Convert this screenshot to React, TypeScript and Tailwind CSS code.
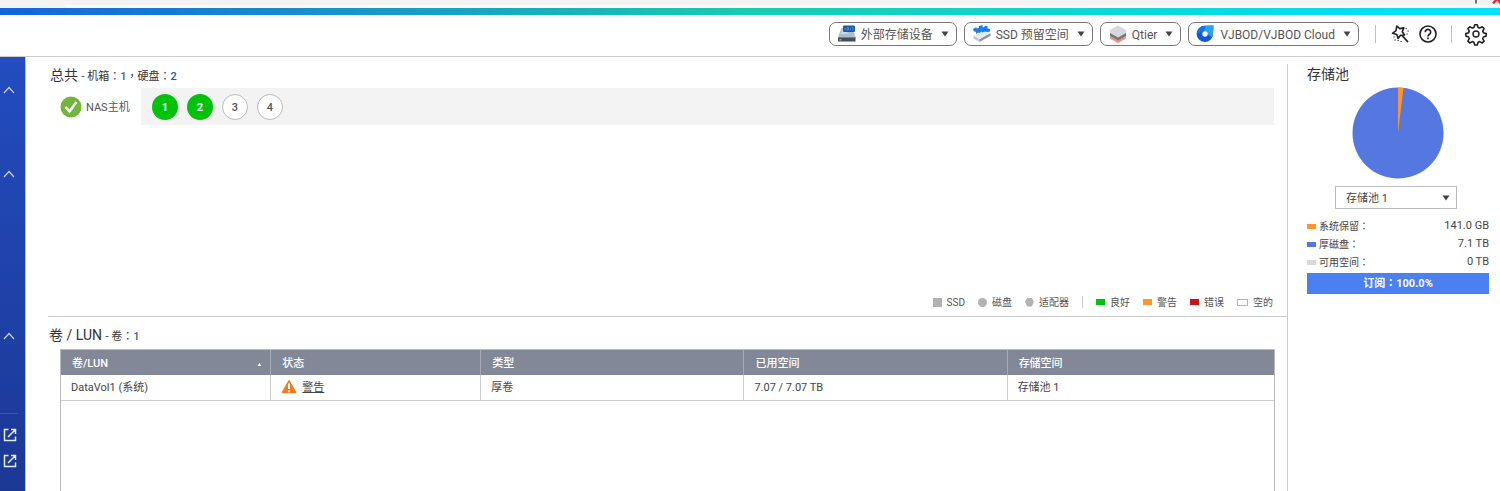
import type { ReactNode } from 'react';

type SpaceRow = { label: string; value: string; color: string };
type LegendItem = { label: string; mark: string };

const disks = [
  { slot: 1, inUse: true },
  { slot: 2, inUse: true },
  { slot: 3, inUse: false },
  { slot: 4, inUse: false },
];

const typeLegend: LegendItem[] = [
  { label: 'SSD', mark: 'size-[9px] bg-[#b3b3b3]' },
  { label: '磁盘', mark: 'size-[9px] rounded-full bg-[#b3b3b3]' },
  { label: '适配器', mark: 'size-[9px] bg-[#b3b3b3] [clip-path:polygon(25%_0,75%_0,100%_50%,75%_100%,25%_100%,0_50%)]' },
];

const stateLegend: LegendItem[] = [
  { label: '良好', mark: 'h-[6px] w-[9px] bg-[#00c20a]' },
  { label: '警告', mark: 'h-[6px] w-[9px] bg-[#ff9626]' },
  { label: '错误', mark: 'h-[6px] w-[9px] bg-[#c91414]' },
  { label: '空的', mark: 'h-[7px] w-[11px] border border-[#b5b5b5] bg-white' },
];

const spaceRows: SpaceRow[] = [
  { label: '系统保留：', value: '141.0 GB', color: 'bg-[#ff9429]' },
  { label: '厚磁盘：', value: '7.1 TB', color: 'bg-[#5577e0]' },
  { label: '可用空间：', value: '0 TB', color: 'bg-[#d9d9d9]' },
];

function Caret() {
  return (
    <svg viewBox="0 0 8 6" className="h-[6px] w-2 shrink-0 fill-[#444]" aria-hidden="true">
      <path d="M0.5 0.5h7L4 5.5z" />
    </svg>
  );
}

function MenuButton({ icon, children }: { icon: ReactNode; children: ReactNode }) {
  return (
    <button
      type="button"
      className="flex h-6 items-center gap-2 rounded-[7px] border border-[#777] bg-white px-[7px] text-[12px] text-[#555]"
    >
      <span className="flex items-center gap-1">
        {icon}
        <span className="pt-px">{children}</span>
      </span>
      <Caret />
    </button>
  );
}

function DriveIcon() {
  return (
    <svg viewBox="0 0 20 18" className="h-[18px] w-5" aria-hidden="true">
      <path d="M4.500 3h11l3 9H1z" fill="#a9bfd0" />
      <path d="M5.500 4h5v5h-7z" fill="#c9d8e3" />
      <path d="M1 12h17.500v4.500H1z" fill="#454c55" />
      <path d="M1 12h17.500v1H1z" fill="#71808c" />
      <rect x="6" y="0.500" width="12" height="6.500" rx="1" fill="#1c5aa8" />
      <path d="M8 2.500v2.500M10 2.500h1.500v2.500h-1.500zM13.500 2.500v2.500M15 2.500h1v2.500h-1" stroke="#6fa4dc" strokeWidth="0.600" fill="none" />
      <rect x="2.500" y="14" width="1.800" height="1.500" fill="#7bd21d" />
    </svg>
  );
}

function ReserveIcon() {
  return (
    <svg viewBox="0 0 20 18" className="h-[18px] w-5" aria-hidden="true">
      <path d="M1.500 10.500l6 3.500v3l-6-3.500z" fill="#c2c5d6" />
      <path d="M7.500 14l11-6v2.800l-11 6.200z" fill="#8e91a8" />
      <path d="M1.500 10.500l11-5.500 6 3-11 6z" fill="#e7e9f1" />
      <path d="M1 4l3.500-2v1.500L7 3V1l3.500-1v2.500l2-.5V.8l3 .4v2.300l2.500.5v2.500l-3 .5-2-.5-2.500 1-1-1-2 1.500-1.500-.5L4 9V7L1.500 6z" fill="#1580ec" />
    </svg>
  );
}

function QtierIcon() {
  return (
    <svg viewBox="0 0 20 18" className="h-[18px] w-5" aria-hidden="true">
      <path d="M2 11l8 4 8-4v2.500L10 18l-8-4.500z" fill="#fb8a76" />
      <path d="M2 7l8 4.500L18 7v4l-8 4.500L2 11z" fill="#6f7b84" />
      <path d="M10 0.500l8 4.500v3l-8 4.500L2 8V5z" fill="#d8d9dc" />
    </svg>
  );
}

function VjbodIcon() {
  return (
    <svg viewBox="0 0 18 18" className="mr-[2px] size-[18px]" aria-hidden="true">
      <path d="M17.500 0.500L17 9a8.200 8.200 0 1 1-8-8.300z" fill="#1558d6" />
      <path d="M17.500 0.500L17 9a8 8 0 0 1-.8 3.500L11.500 9 8 5.500 9 .7z" fill="#28a0f8" />
      <path d="M0.800 9A8.200 8.200 0 0 1 9 .7L8 6z" fill="#1273ec" />
      <circle cx="9" cy="9" r="2.700" fill="#fff" />
    </svg>
  );
}

function WandIcon() {
  return (
    <svg viewBox="0 0 20 20" className="size-5" fill="none" stroke="#222" aria-hidden="true">
      <path d="M6.800 2l3 2.600 4-.7-1.500 3.800 2.200 3.300-4 .2-2.400 3.300-1.400-4-4.200-1.200L6 6.600z" strokeWidth="1.600" strokeLinejoin="round" />
      <path d="M12 11.500l6 6.500" strokeWidth="1.800" />
      <path d="M15.500 4.500h1.200M17.500 7h1.200M16.500 10h1.200M3.500 13h1.200M4.500 16h1.200M7.500 16.500h1.200M10.500 17.500h1.200" strokeWidth="1.200" />
    </svg>
  );
}

function HelpIcon() {
  return (
    <svg viewBox="0 0 20 20" className="size-5" fill="none" stroke="#222" aria-hidden="true">
      <circle cx="10" cy="10" r="8" strokeWidth="1.600" />
      <path d="M7.300 8.200a2.700 2.700 0 1 1 4.200 2.100c-1 .7-1.500 1.100-1.500 2.100" strokeWidth="1.700" />
      <path d="M10 13.500v1.800" strokeWidth="1.700" />
    </svg>
  );
}

function GearIcon() {
  return (
    <svg viewBox="0 0 24 24" className="size-6" fill="none" stroke="#222" strokeWidth="1.700" aria-hidden="true">
      <path
        d="M10.700 2.200h2.600l.9 2.900 1.700.7 2.700-1.400 1.900 1.900-1.400 2.700.7 1.700 2.900.9v2.600l-2.900.9-.7 1.700 1.400 2.700-1.900 1.900-2.700-1.400-1.700.7-.9 2.900h-2.600l-.9-2.900-1.700-.7-2.700 1.400-1.900-1.900 1.400-2.700-.7-1.700-2.900-.9v-2.600l2.900-.9.7-1.700-1.400-2.700 1.900-1.900 2.700 1.400 1.700-.7z"
        strokeLinejoin="round"
        transform="translate(0.600 0.600) scale(0.950)"
      />
      <circle cx="12" cy="12" r="3" strokeWidth="1.400" />
    </svg>
  );
}

function ChevronUpIcon() {
  return (
    <svg viewBox="0 0 12 8" className="h-2 w-3" fill="none" stroke="#c3cff2" strokeWidth="1.200" aria-hidden="true">
      <path d="M1 7L6 1.500l5 5.500" />
    </svg>
  );
}

function ExternalIcon() {
  return (
    <svg viewBox="0 0 14 14" className="size-[14px]" fill="none" stroke="#e4eaf9" strokeWidth="1.500" aria-hidden="true">
      <path d="M5.500 1.500H1.500v11h11V8.500M8 1.500h4.500V6M12.500 1.500L5 9" />
    </svg>
  );
}

function BrowserStrip() {
  return (
    <div className="h-2 overflow-hidden bg-[#f3f3f3]">
      <div className="flex h-[5px] items-start justify-end">
        <svg viewBox="0 0 30 4" className="h-1 w-[30px]" aria-hidden="true">
          <path d="M6 0v3.500" stroke="#6c6f7c" strokeWidth="2" />
          <path d="M23 3.500L27 -1l4 4.500" stroke="#ee2b35" strokeWidth="2.500" fill="none" />
        </svg>
      </div>
      <div className="ml-[67px] h-[3px] bg-[#fafafa]" />
    </div>
  );
}

function Toolbar() {
  return (
    <header className="flex h-[42px] items-center justify-end border-b border-[#ccc] pr-3 pb-[3px]">
      <div className="flex gap-[7px]">
        <MenuButton icon={<DriveIcon />}>外部存储设备</MenuButton>
        <MenuButton icon={<ReserveIcon />}>SSD 预留空间</MenuButton>
        <MenuButton icon={<QtierIcon />}>Qtier</MenuButton>
        <MenuButton icon={<VjbodIcon />}>VJBOD/VJBOD Cloud</MenuButton>
      </div>
      <span className="ml-4 h-[18px] w-px bg-[#c4bfb8]" />
      <button type="button" aria-label="向导" className="ml-[14px]"><WandIcon /></button>
      <button type="button" aria-label="帮助" className="ml-2"><HelpIcon /></button>
      <span className="ml-[13px] h-[18px] w-px bg-[#c4bfb8]" />
      <button type="button" aria-label="设置" className="ml-3"><GearIcon /></button>
    </header>
  );
}

function Sidebar() {
  return (
    <nav className="flex w-[26px] shrink-0 flex-col items-start border-r border-[#b9c3e2] bg-linear-to-b from-[#234cc0] to-[#1c3895] pl-[3px]">
      <button type="button" aria-label="收起存储" className="mt-[29px] h-2"><ChevronUpIcon /></button>
      <button type="button" aria-label="收起空间" className="mt-[76px] h-2"><ChevronUpIcon /></button>
      <button type="button" aria-label="收起加速" className="mt-[154px] h-2"><ChevronUpIcon /></button>
      <hr className="mt-[73px] -ml-[3px] w-[18px] border-[#3c57ad]" />
      <a href="#external-1" aria-label="外部链接" className="mt-[14px]"><ExternalIcon /></a>
      <a href="#external-2" aria-label="外部链接" className="mt-3"><ExternalIcon /></a>
    </nav>
  );
}

function LegendList({ items }: { items: LegendItem[] }) {
  return (
    <ul className="flex gap-[13px]">
      {items.map(item => (
        <li key={item.label} className="flex items-center gap-[5px]">
          <span className={item.mark} />
          {item.label}
        </li>
      ))}
    </ul>
  );
}

function Overview() {
  return (
    <section className="ml-[22px] flex h-[260px] flex-col border-b border-[#ccc]">
      <h2 className="mt-2 ml-[2px] h-5 text-[14px] leading-5">
        总共 <span className="text-[11px]">- 机箱：<b className="font-medium text-[#2a5ca8]">1</b>，硬盘：<b className="font-medium text-[#2a5ca8]">2</b></span>
      </h2>
      <div className="mt-[3px] mr-[13px] ml-3 flex h-[37px] items-center">
        <svg viewBox="0 0 22 22" className="size-[22px]" aria-hidden="true">
          <circle cx="11" cy="11" r="10.500" fill="#72b63b" />
          <path d="M5.500 11l4 4.500 7-9.500" fill="none" stroke="#fff" strokeWidth="2.500" />
        </svg>
        <span className="ml-1 w-[55px] pt-[3px] text-[11px] text-[#555]">NAS主机</span>
        <ul className="flex h-full flex-1 items-center gap-[9px] bg-[#f3f3f3] pl-[11px]">
          {disks.map(disk => (
            <li key={disk.slot}>
              <button
                type="button"
                className={
                  disk.inUse
                    ? 'size-[26px] rounded-full bg-[#00c20a] pt-[3px] text-[11px] font-bold text-white'
                    : 'size-[26px] rounded-full border border-[#bbb] bg-white pt-[3px] text-[11px] font-medium text-[#555]'
                }
              >
                {disk.slot}
              </button>
            </li>
          ))}
        </ul>
      </div>
      <div className="mt-auto mr-[14px] mb-[6px] flex h-4 items-center justify-end text-[10px] text-[#555]">
        <LegendList items={typeLegend} />
        <span className="mx-[13px] h-3 w-px bg-[#ccc]" />
        <LegendList items={stateLegend} />
      </div>
    </section>
  );
}

function VolumeTable() {
  return (
    <section className="flex flex-1 flex-col">
      <h2 className="mt-2 ml-[23px] h-5 text-[14px] leading-5">
        卷 / LUN <span className="text-[11px]">- 卷：<b className="font-medium text-[#2a5ca8]">1</b></span>
      </h2>
      <div className="mt-1 mr-[12px] ml-[34px] flex-1 border-x border-t border-[#bbb]">
        <table className="w-full table-fixed border-collapse text-left text-[11px]">
          <thead>
            <tr className="h-[25px] bg-[#828897] text-white [&>th]:border-r [&>th]:border-[#a5aab6] [&>th]:px-[11px] [&>th]:pt-1 [&>th]:font-medium [&>th:last-child]:border-r-0">
              <th className="w-[17.3%]">
                <span className="flex items-center justify-between">
                  卷/LUN
                  <svg viewBox="0 0 4 3" className="-mr-[3px] h-[3px] w-[5px] fill-white" aria-hidden="true"><path d="M0 3l2-3 2 3z" /></svg>
                </span>
              </th>
              <th className="w-[17.3%]">状态</th>
              <th className="w-[21.7%]">类型</th>
              <th className="w-[21.7%]">已用空间</th>
              <th>存储空间</th>
            </tr>
          </thead>
          <tbody>
            <tr className="h-[25px] border-b border-[#ccc] text-[#444] [&>td]:border-r [&>td]:border-[#ccc] [&>td]:px-[10px] [&>td]:pt-[2px] [&>td:last-child]:border-r-0">
              <td>DataVol1 (系统)</td>
              <td>
                <span className="flex items-start gap-[5px]">
                  <svg viewBox="0 0 16 14" className="h-[14px] w-4" aria-hidden="true">
                    <path d="M8 1l6.500 11.500h-13z" fill="#ef7d22" stroke="#ef7d22" strokeWidth="1.600" strokeLinejoin="round" />
                    <path d="M8 3.500v5.500M8 10.500v1.800" stroke="#fff" strokeWidth="1.800" />
                  </svg>
                  <a href="#warning" className="underline">警告</a>
                </span>
              </td>
              <td>厚卷</td>
              <td>7.07 / 7.07 TB</td>
              <td>存储池 1</td>
            </tr>
          </tbody>
        </table>
      </div>
    </section>
  );
}

function PoolPanel() {
  return (
    <aside className="mt-[7px] w-[213px] shrink-0 border-l border-[#ccc] pr-[11px] pl-[19px]">
      <h2 className="h-5 text-[14px] leading-5">存储池</h2>
      <svg viewBox="0 0 92 92" className="mx-auto mt-[3px] size-[92px]" role="img" aria-label="存储池">
        <circle cx="46" cy="46" r="45.500" fill="#5577e0" />
        <path d="M46 46V0.500a45.500 45.500 0 0 1 5.500 0.400z" fill="#ff9429" />
      </svg>
      <div className="relative mt-[7px] ml-7 w-[122px]">
        <select aria-label="存储池" className="block h-[23px] w-full appearance-none border border-[#bbb] bg-white pt-[3px] pl-[10px] text-[11px] text-[#444]">
          <option>存储池 1</option>
        </select>
        <span className="pointer-events-none absolute inset-y-0 right-[7px] flex items-center"><Caret /></span>
      </div>
      <dl className="mt-2 text-[10px] text-[#444]">
        {spaceRows.map(row => (
          <div key={row.label} className="flex h-[18px] items-center">
            <span className={`mr-[3px] h-[5px] w-[9px] ${row.color}`} />
            <dt>{row.label}</dt>
            <dd className="ml-auto text-[11px]">{row.value}</dd>
          </div>
        ))}
      </dl>
      <p className="mt-[2px] h-[21px] bg-[#4a80f0] text-center text-[11px] leading-[21px] font-bold text-white">订阅：100.0%</p>
    </aside>
  );
}

export default function App() {
  return (
    <div className="flex min-h-screen flex-col bg-white font-['Roboto','Noto_Sans_CJK_TC',sans-serif] text-[#333]">
      <BrowserStrip />
      <div className="h-[7px] bg-linear-to-r/srgb from-[#1464e0] via-[#18ccb0] to-[#00e2ff]" />
      <Toolbar />
      <div className="flex flex-1">
        <Sidebar />
        <main className="flex min-w-0 flex-1 flex-col">
          <Overview />
          <VolumeTable />
        </main>
        <PoolPanel />
      </div>
    </div>
  );
}
